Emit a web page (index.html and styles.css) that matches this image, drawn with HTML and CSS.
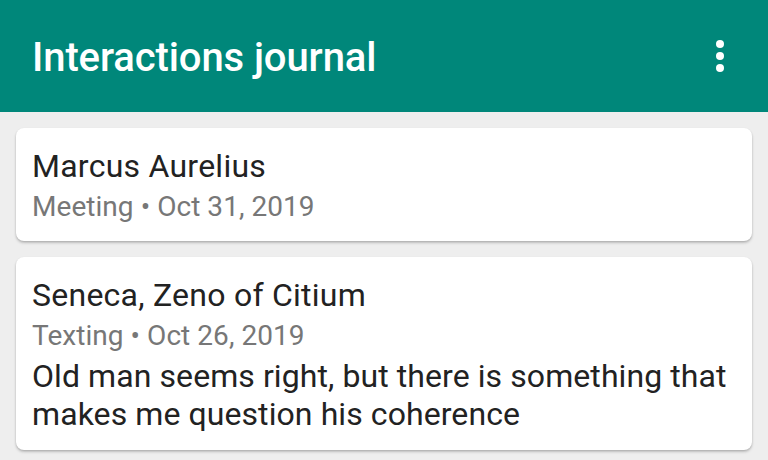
FILE: index.html
```html
<!DOCTYPE html>
<html lang="en">
<head>
<meta charset="utf-8">
<title>Interactions journal</title>
<link rel="stylesheet" href="styles.css">
</head>
<body>
<header class="appbar">
  <h1 class="appbar-title">Interactions journal</h1>
  <button class="overflow" aria-label="More options">
    <svg viewBox="0 0 24 24" width="48" height="48" aria-hidden="true">
      <circle cx="12" cy="6" r="2" fill="#fff"/>
      <circle cx="12" cy="12" r="2" fill="#fff"/>
      <circle cx="12" cy="18" r="2" fill="#fff"/>
    </svg>
  </button>
</header>
<main class="list">
  <article class="card">
    <div class="card-title">Marcus Aurelius</div>
    <div class="card-meta">Meeting • Oct 31, 2019</div>
  </article>
  <article class="card">
    <div class="card-title">Seneca, Zeno of Citium</div>
    <div class="card-meta">Texting • Oct 26, 2019</div>
    <p class="card-body">Old man seems right, but there is something that makes me question his coherence</p>
  </article>
</main>
</body>
</html>
```
FILE: styles.css
```css
* { box-sizing: border-box; }
html, body { margin: 0; padding: 0; }
body {
  background: #eeeeee;
  font-family: Roboto, "Noto Sans", "Liberation Sans", sans-serif;
  width: 768px;
  height: 460px;
  overflow: hidden;
}
.appbar {
  height: 112px;
  background: #00877a;
  display: flex;
  align-items: center;
  padding: 4px 24px 0 32px;
}
.appbar-title {
  flex: 1;
  margin: 0;
  color: #ffffff;
  font-size: 40px;
  font-weight: 500;
  line-height: 48px;
  letter-spacing: -0.1px;
}
.overflow {
  width: 48px;
  height: 48px;
  margin-top: -4px;
  padding: 0;
  border: 0;
  background: transparent;
  display: flex;
}
.list {
  display: flex;
  flex-direction: column;
  gap: 16px;
  padding: 16px;
}
.card {
  background: #ffffff;
  border-radius: 8px;
  padding: 16px 16px 15px 16px;
  box-shadow: 0 2px 3px rgba(0,0,0,0.18), 0 1px 2px rgba(0,0,0,0.12);
}
.card-title {
  color: #222222;
  font-size: 32px;
  line-height: 44px;
  letter-spacing: 0.25px;
}
.card-meta {
  color: #777777;
  font-size: 28px;
  line-height: 38px;
  letter-spacing: 0.05px;
}
.card-body {
  margin: 2px 0 2px 0;
  color: #222222;
  font-size: 32px;
  line-height: 38px;
  letter-spacing: 0.08px;
}
```
